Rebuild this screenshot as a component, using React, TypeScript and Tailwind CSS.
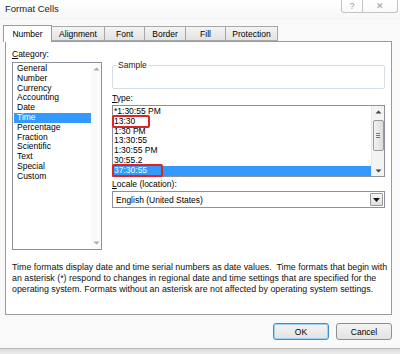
import { ReactNode } from "react";

const categories = [
  "General",
  "Number",
  "Currency",
  "Accounting",
  "Date",
  "Time",
  "Percentage",
  "Fraction",
  "Scientific",
  "Text",
  "Special",
  "Custom",
];

const types = ["*1:30:55 PM", "13:30", "1:30 PM", "13:30:55", "1:30:55 PM", "30:55.2", "37:30:55"];

const tabs = ["Number", "Alignment", "Font", "Border", "Fill", "Protection"];
const tabWidths = ["w-[49px]", "w-[53px]", "w-[40px]", "w-[41px]", "w-[40px]", "w-[52px]"];

function Arrow({ up, dim }: { up?: boolean; dim?: boolean }) {
  return (
    <svg width="7" height="4" viewBox="0 0 7 4" className={up ? "" : "rotate-180"}>
      <path d="M0.5 3.5 L3.5 0.5 L6.5 3.5 Z" fill={dim ? "#a8a8a8" : "#404040"} />
    </svg>
  );
}

// red annotation box drawn over a list entry
function Marked({ children, w }: { children: ReactNode; w: string }) {
  return (
    <span className={`relative inline-block ${w}`}>
      {children}
      <span className="absolute -left-[2px] right-0 -top-[2px] -bottom-[1px] rounded-[2px] border-2 border-[#dd2424]" />
    </span>
  );
}

function Btn({ label, primary }: { label: string; primary?: boolean }) {
  return (
    <div
      className={`w-[56px] h-[17px] flex items-center justify-center rounded-[3px] border bg-gradient-to-b from-[#f4f4f4] to-[#e2e2e2] ${
        primary ? "border-[#3c8dc8] shadow-[inset_0_0_0_1px_#9fd3f3]" : "border-[#8e8f8f]"
      }`}
    >
      {label}
    </div>
  );
}

export default function App() {
  return (
    <div
      className="w-[400px] h-[354px] bg-[#f9f9f9] text-black text-[8.5px] leading-[10px] flex flex-col overflow-hidden"
      style={{ fontFamily: '"Liberation Sans", Arial, sans-serif' }}
    >
      {/* title bar */}
      <div className="h-[20px] flex items-start justify-between bg-gradient-to-b from-white to-[#f6f6f6]">
        <div className="pl-[5px] pt-[3px] text-[9.5px] leading-[11px] text-[#222]">Format Cells</div>
        <div className="mr-[2px] flex h-[13px] border-l border-b border-r border-[#c4c4c4] rounded-b-[3px] text-[#9a9a9a] text-[9px] leading-[12px]">
          <div className="w-[21px] flex justify-center border-r border-[#c4c4c4]">?</div>
          <div className="w-[34px] flex justify-center">✕</div>
        </div>
      </div>

      {/* tabs */}
      <div className="h-[21px] flex items-end pl-[3px]">
        {tabs.map((t, i) =>
          i === 0 ? (
            <div
              key={t}
              className={`${tabWidths[i]} h-[17px] bg-white border border-b-0 border-[#9b9b9b] flex items-center justify-center relative z-10 -mb-px pb-[1px]`}
            >
              {t}
            </div>
          ) : (
            <div
              key={t}
              className={`${tabWidths[i]} h-[15px] bg-gradient-to-b from-[#f4f4f4] to-[#e3e3e3] border border-l-0 border-[#a8a8a8] flex items-center justify-center`}
            >
              {t}
            </div>
          )
        )}
      </div>

      {/* panel */}
      <div className="mx-[5px] w-[387px] h-[274px] bg-white border border-[#9b9b9b] flex flex-col px-[6px] pt-[7px]">
        <div className="flex gap-[10px]">
          {/* category */}
          <div className="flex flex-col w-[90px]">
            <div className="h-[13px]">
              <span className="underline">C</span>ategory:
            </div>
            <div className="h-[188px] border border-[#8c9099] flex">
              <div className="flex-1 flex flex-col pl-[1px] pt-px">
                {categories.map((c) => (
                  <div
                    key={c}
                    className={`h-[9.8px] leading-[9.8px] pl-[3px] ${c === "Time" ? "bg-[#3399ff] text-white" : ""}`}
                  >
                    {c}
                  </div>
                ))}
              </div>
              <div className="w-[10px] bg-[#fafafa] flex flex-col items-center justify-between py-[4px]">
                <Arrow up dim />
                <Arrow dim />
              </div>
            </div>
          </div>

          {/* right column */}
          <div className="flex-1 flex flex-col pt-[16px]">
            <div className="relative h-[24px] border border-[#d5dfe5] rounded-[2px]">
              <span className="absolute left-[4px] -top-[6px] bg-white px-px text-[#222]">Sample</span>
            </div>
            <div className="mt-[4px] h-[12px] leading-[11px]">
              <span className="underline">T</span>ype:
            </div>
            <div className="h-[72px] border border-[#8c9099] flex">
              <div className="flex-1 flex flex-col pt-[1px]">
                {types.map((t, i) => (
                  <div
                    key={t}
                    className={`h-[9.8px] leading-[9.8px] pl-[1px] ${i === 6 ? "bg-[#3399ff] text-white" : ""}`}
                  >
                    {i === 1 ? <Marked w="w-[36px]">{t}</Marked> : i === 6 ? <Marked w="w-[49px]">{t}</Marked> : t}
                  </div>
                ))}
              </div>
              <div className="w-[13px] bg-[#f3f3f3] border-l border-[#e8e8e8] flex flex-col items-center">
                <div className="h-[11px] flex items-center">
                  <Arrow up />
                </div>
                <div className="mt-[3px] w-[11px] h-[31px] rounded-[2px] border border-[#9a9a9a] bg-gradient-to-r from-[#f2f2f2] to-[#dcdcdc] flex flex-col items-center justify-center gap-[1px]">
                  <div className="w-[4px] h-px bg-[#7a7a7a]" />
                  <div className="w-[4px] h-px bg-[#7a7a7a]" />
                  <div className="w-[4px] h-px bg-[#7a7a7a]" />
                </div>
                <div className="mt-auto h-[11px] flex items-center">
                  <Arrow />
                </div>
              </div>
            </div>
            <div className="mt-[2px] h-[12px] leading-[11px]">
              <span className="underline">L</span>ocale (location):
            </div>
            <div className="h-[17px] border border-[#8c9099] flex items-center">
              <div className="flex-1 pl-[3px]">English (United States)</div>
              <div className="w-[13px] h-[13px] mr-px border border-[#9a9a9a] rounded-[1px] bg-gradient-to-b from-[#f6f6f6] to-[#dedede] flex items-center justify-center">
                <svg width="7" height="4" viewBox="0 0 7 4">
                  <path d="M0 0 L7 0 L3.5 4 Z" fill="#111" />
                </svg>
              </div>
            </div>
          </div>
        </div>

        <div className="mt-[12px] text-[8.85px] leading-[11px] text-[#111] whitespace-nowrap">
          <div>Time formats display date and time serial numbers as date values.&nbsp; Time formats that begin with</div>
          <div>an asterisk (*) respond to changes in regional date and time settings that are specified for the</div>
          <div>operating system. Formats without an asterisk are not affected by operating system settings.</div>
        </div>
      </div>

      {/* buttons */}
      <div className="flex justify-end gap-[7px] pr-[8px] pt-[8px]">
        <Btn label="OK" primary />
        <Btn label="Cancel" />
      </div>

      <div className="mt-auto h-[6px] border-t border-[#b8b8b8] bg-gradient-to-b from-[#dcdcdc] to-[#ececec]" />
    </div>
  );
}
